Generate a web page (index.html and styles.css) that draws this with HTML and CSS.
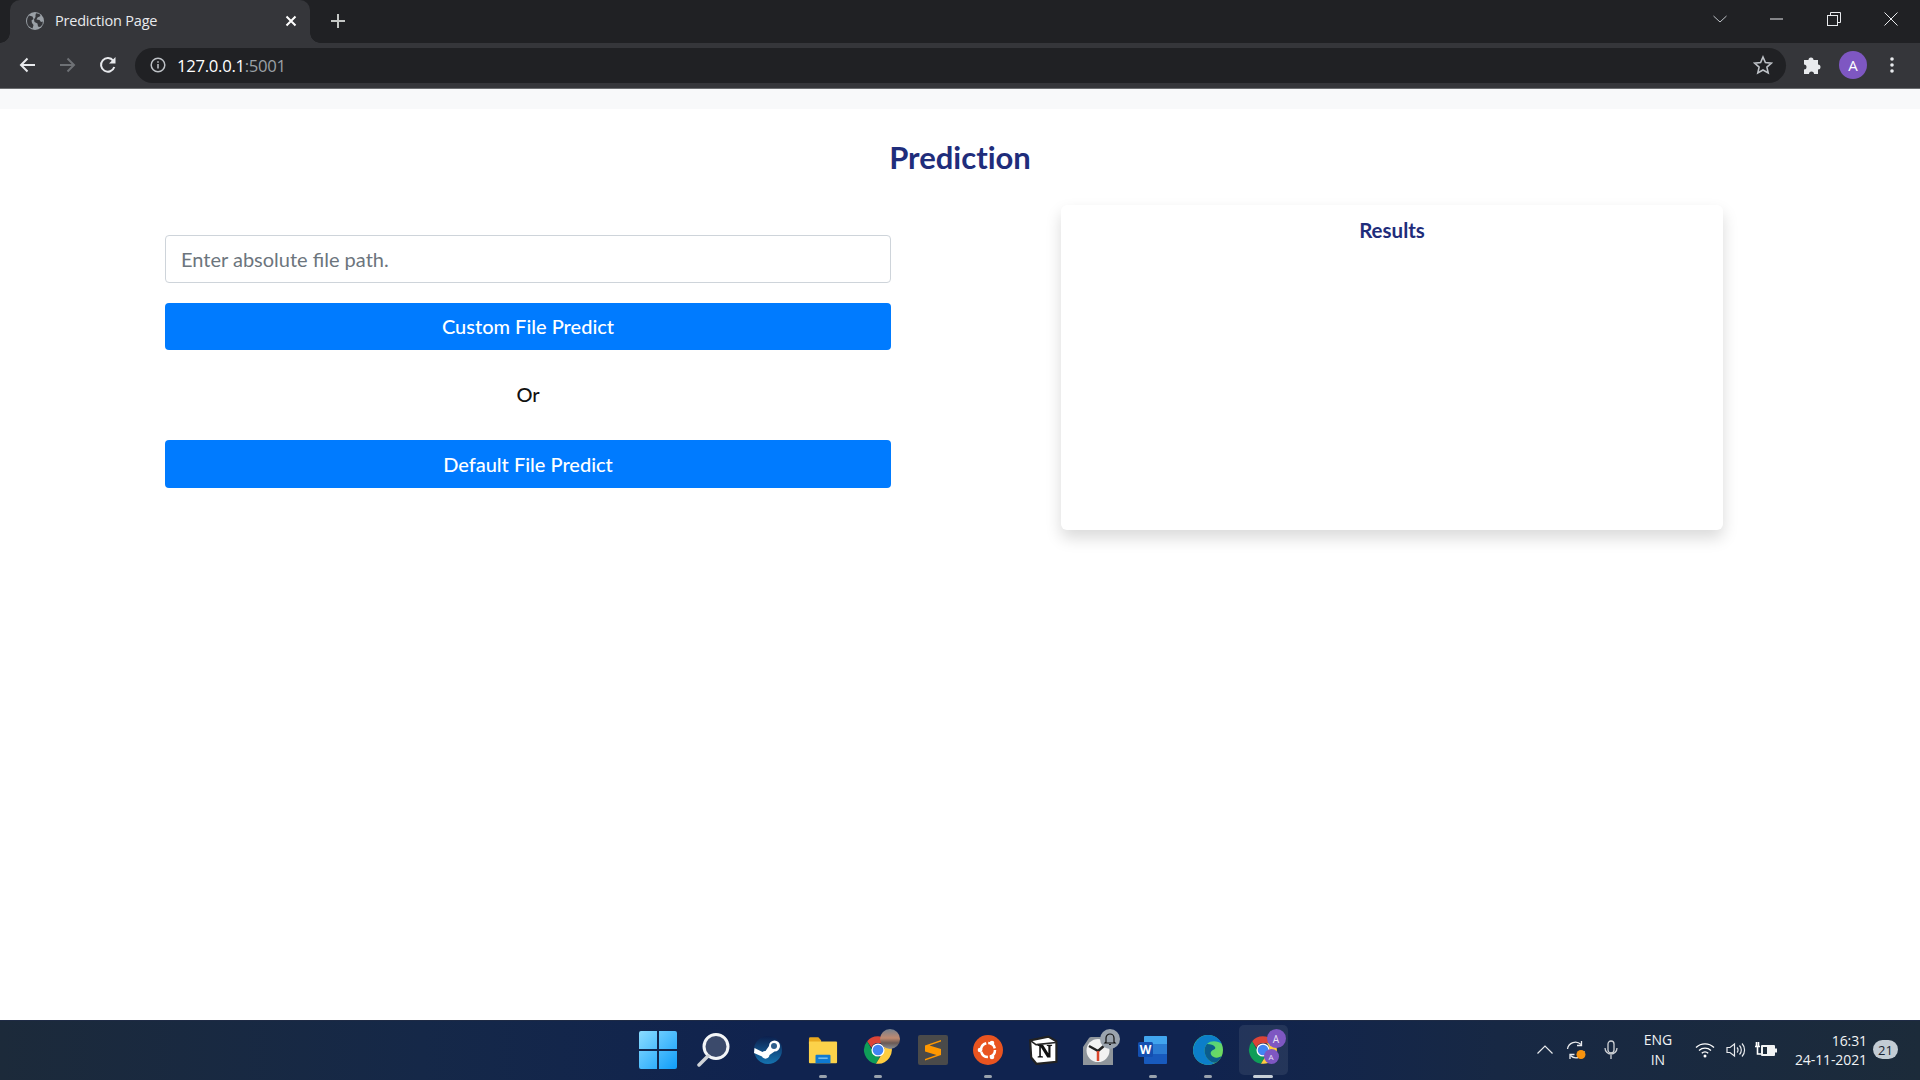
FILE: index.html
```html
<!DOCTYPE html>
<html lang="en">
<head>
<meta charset="utf-8">
<title>Prediction Page</title>
<link rel="stylesheet" href="styles.css">
</head>
<body>
<svg class="defs" width="0" height="0" aria-hidden="true">
  <symbol id="chrome" viewBox="0 0 48 48">
    <path fill="#db4437" d="M24 2a22 22 0 0 1 19 11H24a11 11 0 0 0-10.4 7.4L6.6 10A22 22 0 0 1 24 2z"/>
    <path fill="#0f9d58" d="M6.6 10l8.9 15.6A10 10 0 0 0 27 34.6l-6.3 11.2A22 22 0 0 1 6.600 10z"/>
    <path fill="#ffcd40" d="M43 13a22 22 0 0 1-22.300 32.800L31 29a11 11 0 0 0-1-16z"/>
    <circle cx="24" cy="24" r="10.500" fill="#fff"/>
    <circle cx="24" cy="24" r="8.500" fill="#4285f4"/>
  </symbol>
</svg>

<header class="chrome">
  <div class="tabstrip">
    <div class="tab">
      <svg class="favicon" viewBox="0 0 18 18"><circle cx="9" cy="9" r="9" fill="#9aa0a6"/><path fill="#35363a" d="M3 3.500l3.500 1 1 2.500-2 1.500.5 2.500 1.500 2-1 3.500A8 8 0 0 1 1 9a8 8 0 0 1 2-5.500zM10 1.200l3.500.8 1 2-3 1.500-1 2 3 .5 1.500 2 1.800-.5-.3 3-2.500 2.500-2-.5-.5-3-3-1.500-.5-2.500 1.500-2.500L9.500 3z"/></svg>
      <span class="tab-title">Prediction Page</span>
      <svg class="tab-close" viewBox="0 0 12 12"><path d="M1.500 1.500l9 9m0-9l-9 9" stroke="#fff" stroke-width="2"/></svg>
    </div>
    <svg class="newtab" viewBox="0 0 16 16"><path d="M8 1v14M1 8h14" stroke="#c4c7c5" stroke-width="2"/></svg>
    <div class="win-controls">
      <svg class="win-btn" viewBox="0 0 14 8"><path d="M.5 1L7 7l6.500-6" fill="none" stroke="#bdc1c6"/></svg>
      <svg class="win-btn" viewBox="0 0 14 2"><path d="M0 1h13" stroke="#e8eaed" stroke-width="1"/></svg>
      <svg class="win-btn" viewBox="0 0 14 14"><path d="M3.500 3V.5h10v10H11" fill="none" stroke="#e8eaed"/><rect x=".5" y="3.500" width="10" height="10" fill="none" stroke="#e8eaed"/></svg>
      <svg class="win-btn" viewBox="0 0 14 14"><path d="M.5.500l13 13m0-13l-13 13" stroke="#e8eaed"/></svg>
    </div>
  </div>
  <div class="toolbar">
    <svg class="nav-icon" viewBox="0 0 18 18"><path d="M17 9H3M9.500 2.500L3 9l6.500 6.500" fill="none" stroke="#e8eaed" stroke-width="2"/></svg>
    <svg class="nav-icon" viewBox="0 0 18 18"><path d="M1 9h14M8.500 2.500L15 9l-6.500 6.500" fill="none" stroke="#6e7175" stroke-width="2"/></svg>
    <svg class="nav-icon" viewBox="0 0 18 18"><path d="M15.300 11a6.800 6.800 0 1 1-1-6.200" fill="none" stroke="#e8eaed" stroke-width="2"/><path d="M16.500 1v6.500H10z" fill="#e8eaed"/></svg>
    <div class="omnibox">
      <svg class="info" viewBox="0 0 16 16"><circle cx="8" cy="8" r="6.800" fill="none" stroke="#bdc1c6" stroke-width="1.500"/><path d="M8 7v4.500M8 4.200v1.500" stroke="#bdc1c6" stroke-width="1.500"/></svg>
      <span class="url">127.0.0.1<span class="url-port">:5001</span></span>
      <svg class="star" viewBox="0 0 20 20"><path d="M10 2l2.400 5.500 6 .6-4.500 4 1.300 5.900L10 15l-5.200 3 1.300-5.900-4.500-4 6-.6z" fill="none" stroke="#bdc1c6" stroke-width="1.600"/></svg>
    </div>
    <svg class="puzzle" viewBox="0 0 20 20"><path fill="#e8eaed" d="M1 5h4.500a2.500 2.500 0 0 1 5 0H15v4.500a2.500 2.500 0 0 1 0 5V19h-4a2.500 2.500 0 0 0-5 0H1v-4.500a2.500 2.500 0 0 0 0-5z"/></svg>
    <div class="avatar">A</div>
    <svg class="dots" viewBox="0 0 4 16"><circle cx="2" cy="2" r="1.800" fill="#e8eaed"/><circle cx="2" cy="8" r="1.800" fill="#e8eaed"/><circle cx="2" cy="14" r="1.800" fill="#e8eaed"/></svg>
  </div>
</header>

<main class="page">
  <div class="topnav"></div>
  <h1 class="title">Prediction</h1>
  <div class="columns">
    <section class="form-col">
      <input class="path-input" type="text" placeholder="Enter absolute file path.">
      <button class="btn" type="button">Custom File Predict</button>
      <p class="or">Or</p>
      <button class="btn btn-tall" type="button">Default File Predict</button>
    </section>
    <section class="card">
      <h2 class="card-title">Results</h2>
    </section>
  </div>
</main>

<footer class="taskbar">
  <div class="apps">
    <div class="slot">
      <svg class="app-icon win" viewBox="0 0 40 40"><defs><linearGradient id="w1" x1="0" y1="0" x2="1" y2="1"><stop offset="0" stop-color="#8bdcff"/><stop offset="1" stop-color="#0f9dfa"/></linearGradient></defs><path fill="url(#w1)" d="M1 3a2 2 0 0 1 2-2h16v18H1zM21 1h16a2 2 0 0 1 2 2v16H21zM1 21h18v18H3a2 2 0 0 1-2-2zM21 21h18v16a2 2 0 0 1-2 2H21z"/></svg>
    </div>
    <div class="slot">
      <svg class="app-icon" viewBox="0 0 34 34"><circle cx="20" cy="13.500" r="12" fill="#3b4a6b" stroke="#f4f6f8" stroke-width="3"/><path d="M12 23L3 32" stroke="#cfd3d8" stroke-width="3.500" stroke-linecap="round"/></svg>
    </div>
    <div class="slot">
      <svg class="app-icon" viewBox="0 0 30 30"><defs><linearGradient id="st" x1="0" y1="0" x2="0" y2="1"><stop offset="0" stop-color="#0c1f4d"/><stop offset="1" stop-color="#1573b0"/></linearGradient></defs><circle cx="15" cy="15" r="14" fill="url(#st)"/><path fill="#fff" d="M1 18l8 3.500a4 4 0 0 0 7.500-1.500l5-3.500a5.500 5.500 0 1 0-5.500-5.500l-3.500 5a4 4 0 0 0-3 1L1.500 13z"/><circle cx="21" cy="11" r="3" fill="#2f5e8c"/></svg>
    </div>
    <div class="slot">
      <svg class="app-icon" viewBox="0 0 32 30"><path fill="#e9a91f" d="M1 3a1.500 1.500 0 0 1 1.500-1.500H11l3 3v4H1z"/><path fill="#fcd24a" d="M1 6h29a1 1 0 0 1 1 1v21a1 1 0 0 1-1 1H2a1 1 0 0 1-1-1z"/><path fill="#0f7ad1" d="M9 20h14a1 1 0 0 1 1 1v8H8v-8a1 1 0 0 1 1-1z"/><path fill="#7fc4f0" d="M11 23h10v1.500H11z"/></svg>
      <span class="dot"></span>
    </div>
    <div class="slot">
      <svg class="app-icon" viewBox="0 0 28 28"><use href="#chrome"/></svg>
      <span class="badge-photo"></span>
      <span class="dot"></span>
    </div>
    <div class="slot">
      <svg class="app-icon" viewBox="0 0 30 30"><rect width="30" height="30" rx="2" fill="#4a4a4a"/><path fill="#ff9800" d="M23 5L7 10.500v6L18.500 20 7 24v1.500L23 20v-6l-11.500-3.500L23 6.500z"/></svg>
    </div>
    <div class="slot">
      <svg class="app-icon" viewBox="0 0 30 30"><circle cx="15" cy="15" r="15" fill="#e95420"/><circle cx="15" cy="15" r="7" fill="none" stroke="#fff" stroke-width="2.500" stroke-dasharray="9 2"/><circle cx="7" cy="15" r="2.300" fill="#fff"/><circle cx="19" cy="8" r="2.300" fill="#fff"/><circle cx="19" cy="22" r="2.300" fill="#fff"/></svg>
      <span class="dot"></span>
    </div>
    <div class="slot">
      <svg class="app-icon" viewBox="0 0 28 28"><path fill="#fff" stroke="#222" stroke-width="2" d="M2 5l17-3.500L26.500 6v19L8 27l-5-6z"/><path fill="#111" d="M9 9h5l5 8V10.500l-1.500-.5V9h5v1l-1.500.5V21h-3l-6-9.500v8l2 .5v1H9v-1l1.500-.5v-9L9 10z"/><path d="M2 5l6 4.500M8 9l18-2" stroke="#222" stroke-width="1.500"/></svg>
    </div>
    <div class="slot">
      <svg class="app-icon" viewBox="0 0 30 30"><path fill="#8f959b" d="M0 12L6 3a3 3 0 0 1 3-1h15a3 3 0 0 1 3 2l3 8v18H0z"/><circle cx="15" cy="15.500" r="11.500" fill="#f2f2f2"/><path d="M15 16L6 11M15 16l7-6" stroke="#222" stroke-width="2.500"/><path d="M15 16v10" stroke="#d9442a" stroke-width="2.500"/></svg>
      <span class="bell"><svg viewBox="0 0 14 14"><path d="M3 10V6a4 4 0 0 1 8 0v4l1 1H2zM6 12.500h2" fill="none" stroke="#111" stroke-width="1.200"/></svg></span>
    </div>
    <div class="slot">
      <svg class="app-icon" viewBox="0 0 30 30"><path fill="#41a5ee" d="M7 1h21a1 1 0 0 1 1 1v7H6V2a1 1 0 0 1 1-1z"/><path fill="#2b7cd3" d="M6 9h23v10H6z"/><path fill="#185abd" d="M6 19h23v9a1 1 0 0 1-1 1H7a1 1 0 0 1-1-1z"/><rect y="7" width="15" height="15" rx="1.500" fill="#144fb0"/><text class="word-w" x="7.500" y="18.500" text-anchor="middle">W</text></svg>
      <span class="dot"></span>
    </div>
    <div class="slot">
      <svg class="app-icon" viewBox="0 0 30 30"><defs><linearGradient id="ed" x1="0" y1="0" x2="1" y2="1"><stop offset="0" stop-color="#36c7a0"/><stop offset="1" stop-color="#7de04d"/></linearGradient></defs><circle cx="15" cy="15" r="15" fill="url(#ed)"/><path fill="#0c7ec9" d="M0 15C1 6 8 0 15 0c7 0 12 4 14 9-4-3-11-4-15 0-4 4-3 13 3 17 2 1.500 4 2 6 1.500A15 15 0 0 1 0 15z"/><path fill="#0b5d8c" d="M14 9c-4 4-3 13 3 17 2 1.500 4 2 6 1.500 3-2 5-4.500 6-7-3 3-9 3-11-1-1-2 0-4 3-5 3-1 1-5.500-7-5.500z"/></svg>
      <span class="dot"></span>
    </div>
    <div class="slot slot-active">
      <svg class="app-icon" viewBox="0 0 28 28"><use href="#chrome"/></svg>
      <span class="letter-badge letter-top">A</span>
      <span class="letter-badge letter-bottom">A</span>
      <span class="dot dot-active"></span>
    </div>
  </div>
  <div class="tray">
    <svg class="chev" viewBox="0 0 16 9"><path d="M.5 8.500L8 1l7.500 7.500" fill="none" stroke="#e8eaed" stroke-width="1.200"/></svg>
    <span class="sync">
      <svg viewBox="0 0 20 20"><path d="M1.500 9A8 8 0 0 1 15 4.500M18 11a8 8 0 0 1-13.500 4.500" fill="none" stroke="#e8eaed" stroke-width="1.300"/><path d="M15.500 1v4.500H11M4 19v-4.500h4.500" fill="none" stroke="#e8eaed" stroke-width="1.300"/><circle cx="15" cy="14.500" r="4.500" fill="#f7930e"/></svg>
    </span>
    <svg class="mic" viewBox="0 0 14 20"><rect x="4" y="1" width="6" height="12" rx="3" fill="none" stroke="#cfd2d6" stroke-width="1.300"/><path d="M1 8a6 6 0 0 0 12 0M7 15v4" fill="none" stroke="#cfd2d6" stroke-width="1.300"/></svg>
    <div class="lang"><span>ENG</span><span>IN</span></div>
    <svg class="wifi" viewBox="0 0 20 16"><path d="M1 5.500a13 13 0 0 1 18 0M4 8.500a9 9 0 0 1 12 0M6.800 11.300a4.500 4.500 0 0 1 6.400 0" fill="none" stroke="#fff" stroke-width="1.300"/><circle cx="10" cy="14" r="1.500" fill="#fff"/></svg>
    <svg class="volume" viewBox="0 0 20 16"><path d="M1 5.500h3L8.500 2v12L4 10.500H1z" fill="none" stroke="#e8eaed" stroke-width="1.200"/><path d="M11 5.500a3.500 3.500 0 0 1 0 5M13.500 3.500a6.500 6.500 0 0 1 0 9M16 1.500a9.500 9.500 0 0 1 0 13" fill="none" stroke="#e8eaed" stroke-width="1.200"/></svg>
    <svg class="battery" viewBox="0 0 22 16"><rect x="6" y="3" width="14" height="11" rx="1" fill="#f1f3f4"/><rect x="8" y="5" width="4" height="7" fill="#1c2b3a"/><rect x="20" y="6.500" width="2" height="4" fill="#f1f3f4"/><path d="M0 4.500h5M1.500 0v4.500M3.500 0v4.500M2.500 5v7h3.500" fill="none" stroke="#fff" stroke-width="1.600"/></svg>
    <div class="clock"><span>16:31</span><span>24-11-2021</span></div>
    <span class="notif">21</span>
  </div>
</footer>
</body>
</html>
```
FILE: styles.css
```css
* { box-sizing: border-box; }
html, body { height: 100%; }
body {
  margin: 0;
  display: flex;
  flex-direction: column;
  height: 100vh;
  overflow: hidden;
  background: #fff;
  font-family: Lato, "Open Sans", sans-serif;
}
.defs { position: absolute; }

/* Browser chrome */
.chrome { flex: none; font-family: "Open Sans", "Noto Sans", sans-serif; }
.tabstrip {
  height: 43px;
  background: #202124;
  display: flex;
  align-items: flex-end;
  padding-left: 10px;
}
.tab {
  width: 300px;
  height: 43px;
  background: #35363a;
  border-radius: 10px 10px 0 0;
  display: flex;
  align-items: center;
  padding: 0 16px 2px;
  position: relative;
}
.tab::before, .tab::after {
  content: "";
  position: absolute;
  bottom: 0;
  width: 10px;
  height: 10px;
  background: radial-gradient(circle at 0 0, #202124 9.500px, #35363a 10px);
}
.tab::before { left: -10px; transform: scaleX(1); }
.tab::after { right: -10px; transform: scaleX(-1); }
.favicon { width: 18px; height: 18px; flex: none; }
.tab-title {
  margin-left: 11px;
  color: #e8eaed;
  font-size: 14.500px;
  letter-spacing: -0.200px;
  flex: 1;
  white-space: nowrap;
}
.tab-close { width: 12px; height: 12px; flex: none; margin-right: -3px; }
.newtab { width: 16px; height: 16px; margin: 0 0 14px 20px; flex: none; }
.win-controls {
  margin-left: auto;
  align-self: flex-start;
  display: flex;
  align-items: center;
  height: 37px;
  padding-right: 22px;
  gap: 43px;
}
.win-btn { width: 14px; height: 14px; flex: none; }
.toolbar {
  height: 46px;
  background: #35363a;
  border-bottom: 1px solid #6b6d70;
  display: flex;
  align-items: center;
  padding: 0 0 1px 18px;
}
.nav-icon { width: 18px; height: 18px; margin-right: 23px; flex: none; }
.nav-icon:nth-child(2) { margin-right: 22px; }
.omnibox {
  width: 1651px;
  height: 35px;
  margin-left: -5px;
  border-radius: 18px;
  background: #202124;
  display: flex;
  align-items: center;
  padding: 0 13px 0 15px;
}
.info { width: 16px; height: 16px; flex: none; }
.url {
  margin-left: 11px;
  font-size: 16.700px;
  letter-spacing: -0.300px;
  color: #fff;
  white-space: nowrap;
}
.url-port { color: #9aa0a6; }
.star { width: 20px; height: 20px; margin-left: auto; flex: none; }
.puzzle { width: 20px; height: 20px; margin-left: 17px; flex: none; }
.avatar {
  width: 28px;
  height: 28px;
  margin-left: 16px;
  border-radius: 50%;
  background: #7e57c2;
  color: #fff;
  font-size: 15px;
  display: flex;
  align-items: center;
  justify-content: center;
  flex: none;
}
.dots { width: 4px; height: 16px; margin-left: 23px; flex: none; }

/* Page */
.page { flex: 1; min-height: 0; display: flex; flex-direction: column; }
.topnav { height: 20px; background: #f8f9fa; flex: none; }
.title {
  margin: 29px 0 0;
  text-align: center;
  font-size: 31px;
  line-height: 38px;
  font-weight: 700;
  font-variant-ligatures: none;
  color: #1f2d7b;
}
.columns {
  display: grid;
  grid-template-columns: 726px 662px;
  column-gap: 170px;
  padding: 29px 0 0 165px;
  align-items: start;
}
.form-col { padding-top: 30px; display: flex; flex-direction: column; }
.path-input {
  height: 48px;
  padding: 0 15px;
  border: 1px solid #ced4da;
  border-radius: 4px;
  background: #fff;
  font: 400 20px Lato, sans-serif;
  color: #495057;
  outline: none;
}
.path-input::placeholder { color: #6c757d; opacity: 1; }
.btn {
  height: 47px;
  margin-top: 20px;
  padding: 0 0 2px;
  border: 0;
  border-radius: 4px;
  background: #007bff;
  color: #fff;
  font: 500 20px Lato, sans-serif;
}
.btn-tall { height: 48px; margin-top: 0; padding: 0; }
.or {
  margin: 0;
  height: 90px;
  padding-bottom: 2px;
  display: flex;
  align-items: center;
  justify-content: center;
  font-size: 20px;
  font-weight: 500;
  color: #111;
}
.card {
  height: 325px;
  padding-top: 13px;
  border-radius: 6px;
  background: #fff;
  box-shadow: 0 8px 16px rgba(0, 0, 0, 0.15);
}
.card-title {
  margin: 0;
  text-align: center;
  font-size: 20.500px;
  line-height: 24px;
  font-weight: 700;
  color: #1f2d7b;
}

/* Taskbar */
.taskbar {
  flex: none;
  height: 60px;
  position: relative;
  display: flex;
  justify-content: center;
  background: linear-gradient(90deg, #1c2a3a 0%, #152848 22%, #10234f 40%, #10234f 62%, #172844 78%, #1c2b3a 100%);
  border-top: 1px solid #1f2b45;
}
.apps { display: flex; margin-left: 1px; }
.slot {
  width: 55px;
  height: 59px;
  padding-bottom: 2px;
  position: relative;
  display: flex;
  align-items: center;
  justify-content: center;
}
.app-icon { width: 30px; height: 30px; }
.win { width: 40px; height: 40px; }
.slot:nth-child(2) .app-icon { width: 34px; height: 34px; }
.slot-active::before {
  content: "";
  position: absolute;
  left: 3px;
  right: 3px;
  top: 4px;
  bottom: 5px;
  border-radius: 5px;
  background: rgba(255, 255, 255, 0.08);
}
.slot-active .app-icon { position: relative; }
.dot {
  position: absolute;
  left: 50%;
  bottom: 2px;
  width: 8px;
  height: 3px;
  margin-left: -4px;
  border-radius: 2px;
  background: #99a2ad;
}
.dot-active { width: 20px; margin-left: -10px; background: #c8d0d8; }
.badge-photo {
  position: absolute;
  top: 8px;
  left: 29px;
  width: 20px;
  height: 20px;
  border-radius: 50%;
  background: linear-gradient(180deg, #74808e 0%, #c08a70 45%, #6a5a55 70%, #8a8f96 100%);
}
.bell {
  position: absolute;
  top: 8px;
  left: 29px;
  width: 20px;
  height: 20px;
  border-radius: 50%;
  background: #9aa3ad;
  display: flex;
  align-items: center;
  justify-content: center;
}
.bell svg { width: 14px; height: 14px; }
.word-w { font: 700 12px "Open Sans", sans-serif; fill: #fff; }
.letter-badge {
  position: absolute;
  border-radius: 50%;
  background: #7e57c2;
  color: #e8e0f5;
  font-family: "Open Sans", sans-serif;
  display: flex;
  align-items: center;
  justify-content: center;
}
.letter-top { top: 8px; left: 31px; width: 19px; height: 19px; font-size: 10px; }
.letter-bottom { top: 28px; left: 28px; width: 15px; height: 15px; font-size: 8px; }

.tray {
  position: absolute;
  right: 22px;
  top: 0;
  bottom: 0;
  padding-bottom: 2px;
  display: flex;
  align-items: center;
  font-family: "Open Sans", "Noto Sans", sans-serif;
  color: #f1f3f4;
  font-size: 14px;
}
.chev { width: 16px; height: 9px; }
.sync { width: 20px; height: 20px; margin-left: 13px; }
.sync svg { display: block; width: 20px; height: 20px; }
.mic { width: 14px; height: 20px; margin-left: 18px; }
.lang {
  width: 30px;
  margin-left: 25px;
  display: flex;
  flex-direction: column;
  align-items: center;
  line-height: 20px;
}
.wifi { width: 20px; height: 16px; margin-left: 22px; }
.volume { width: 20px; height: 16px; margin-left: 11px; }
.battery { width: 22px; height: 16px; margin-left: 9px; }
.clock {
  margin-left: 18px;
  display: flex;
  flex-direction: column;
  align-items: flex-end;
  line-height: 19px;
  letter-spacing: -0.100px;
}
.notif {
  width: 25px;
  height: 19px;
  margin-left: 6px;
  border-radius: 10px;
  background: #c3ccd4;
  color: #1a2430;
  font-size: 13px;
  display: flex;
  align-items: center;
  justify-content: center;
}
```
